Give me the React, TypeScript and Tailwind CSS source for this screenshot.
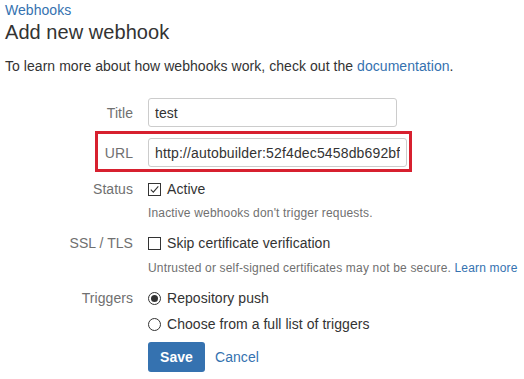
import { useState } from "react";

const Check = ({ checked }: { checked: boolean }) => (
  <span className="flex h-[13px] w-[13px] shrink-0 items-center justify-center border border-[#333] bg-white">
    {checked && (
      <svg viewBox="0 0 11 11" className="h-[11px] w-[11px]" fill="none">
        <path d="M1.8 5.6 L4.3 8.1 L9.3 2.4" stroke="#333" strokeWidth="1.1" />
      </svg>
    )}
  </span>
);

const Radio = ({ checked }: { checked: boolean }) => (
  <span className="flex h-[13px] w-[13px] shrink-0 items-center justify-center rounded-full border border-[#333] bg-white">
    {checked && <span className="h-[7px] w-[7px] rounded-full bg-[#333]" />}
  </span>
);

const Label = ({ children, w = "w-[133px]" }: { children: string; w?: string }) => (
  <div className={`${w} shrink-0 text-right text-[#707070]`}>{children}</div>
);

export default function App() {
  const [active, setActive] = useState(true);
  const [skipSsl, setSkipSsl] = useState(false);
  const [trigger, setTrigger] = useState("push");

  return (
    <div className="h-[379px] w-[524px] overflow-hidden bg-white pl-[5px] font-['Liberation_Sans',Arial,sans-serif] text-[14px] leading-[20px] tracking-[0.05px] text-[#333]">
      <a className="block text-[#3572b0]">Webhooks</a>
      <h1 className="text-[20px] leading-[24px]">Add new webhook</h1>
      <p className="mt-[12px]">
        To learn more about how webhooks work, check out the{" "}
        <a className="text-[#3572b0]">documentation</a>.
      </p>

      <form className="-ml-[5px] mt-[22px]" onSubmit={(e) => e.preventDefault()}>
        <div className="flex items-center gap-[15px]">
          <Label>Title</Label>
          <input
            readOnly
            defaultValue="test"
            className="h-[29px] w-[249px] rounded-[3px] border border-[#ccc] px-[6px] text-[#333] outline-none"
          />
        </div>

        <div className="ml-[95px] mt-[4px] flex w-[317px] items-center gap-[15px] border-[3px] border-[#d7202f] pt-[4px] pb-[2px]">
          <Label w="w-[35px]">URL</Label>
          <input
            readOnly
            defaultValue="http://autobuilder:52f4dec5458db692bf0e@ci.example.com/hook"
            className="h-[29px] w-[259px] rounded-[3px] border border-[#ccc] px-[6px] tracking-[0.15px] text-[#333] outline-none"
          />
        </div>

        <div className="mt-[7px] flex items-center gap-[15px]">
          <Label>Status</Label>
          <label className="flex items-center gap-[6px]" onClick={() => setActive(!active)}>
            <Check checked={active} />
            <span>Active</span>
          </label>
        </div>
        <p className="ml-[148px] mt-[6px] text-[12px] leading-[16px] tracking-[0.17px] text-[#707070]">
          Inactive webhooks don't trigger requests.
        </p>

        <div className="mt-[12px] flex items-center gap-[15px]">
          <Label>SSL / TLS</Label>
          <label className="flex items-center gap-[6px]" onClick={() => setSkipSsl(!skipSsl)}>
            <Check checked={skipSsl} />
            <span>Skip certificate verification</span>
          </label>
        </div>
        <p className="ml-[148px] mt-[7px] text-[12px] leading-[16px] tracking-[0.17px] text-[#707070]">
          Untrusted or self-signed certificates may not be secure.{" "}
          <a className="text-[#3572b0]">Learn more</a>
        </p>

        <div className="mt-[12px] flex items-start gap-[15px]">
          <Label>Triggers</Label>
          <div className="flex flex-col gap-[6px]">
            <label className="flex items-center gap-[6px]" onClick={() => setTrigger("push")}>
              <Radio checked={trigger === "push"} />
              <span>Repository push</span>
            </label>
            <label className="flex items-center gap-[6px]" onClick={() => setTrigger("full")}>
              <Radio checked={trigger === "full"} />
              <span>Choose from a full list of triggers</span>
            </label>
          </div>
        </div>

        <div className="ml-[148px] mt-[8px] flex items-center gap-[10px]">
          <button className="h-[30px] w-[57px] rounded-[3px] bg-[#3572b0] font-bold text-white">
            Save
          </button>
          <a className="text-[#3572b0]">Cancel</a>
        </div>
      </form>
    </div>
  );
}
